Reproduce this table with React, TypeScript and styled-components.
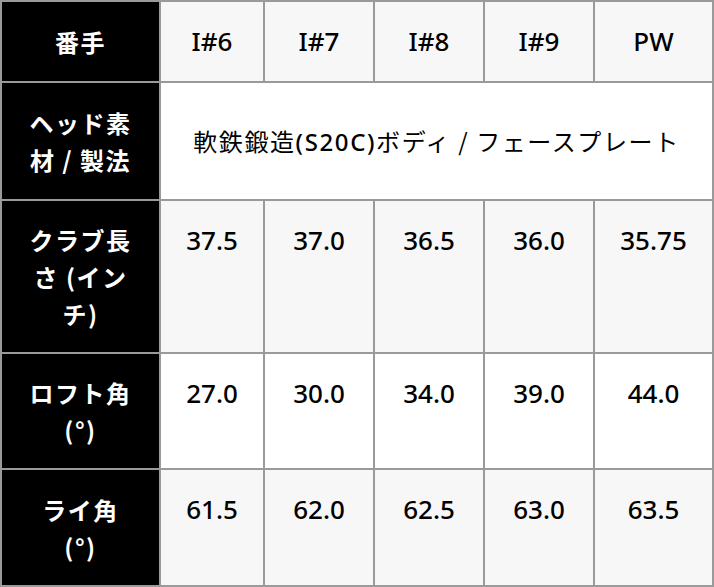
import styled, { createGlobalStyle } from "styled-components";

const Global = createGlobalStyle`
    html, body {
        margin: 0;
        padding: 0;
        background: #ffffff;
    }
    body {
        font-family: "Noto Sans", "Noto Sans CJK JP", sans-serif;
    }
`;

const Table = styled.div`
    display: grid;
    grid-template-columns: 157px 102px 108px 108px 108px 117px;
    grid-template-rows: 79px 116px 151px 114px 115px;
    gap: 2px;
    padding: 2px;
    width: 714px;
    height: 587px;
    box-sizing: border-box;
    background-color: #9a9a9a;
`;

const HeadCell = styled.div`
    display: flex;
    align-items: center;
    justify-content: center;
    text-align: center;
    background-color: #000000;
    color: #ffffff;
    font-family: "Noto Sans CJK JP", "Noto Sans", sans-serif;
    font-weight: 700;
    font-size: 24px;
    letter-spacing: 1.5px;
    line-height: 37px;
`;

const DataCell = styled.div<{ $shade?: boolean; $span?: number; $middle?: boolean }>`
    display: flex;
    justify-content: center;
    align-items: ${(p) => (p.$middle ? "center" : "flex-start")};
    padding-top: ${(p) => (p.$middle ? "0" : "21px")};
    box-sizing: border-box;
    grid-column: ${(p) => (p.$span ? `span ${p.$span}` : "auto")};
    background-color: ${(p) => (p.$shade ? "#f7f7f7" : "#ffffff")};
    color: #000000;
    font-family: "Noto Sans", "Noto Sans CJK JP", sans-serif;
    font-weight: 500;
    font-size: 26px;
    line-height: 37px;
    white-space: nowrap;
`;

const Spec = styled.span`
    font-family: "Noto Sans CJK JP", sans-serif;
    font-weight: 400;
    font-size: 24px;
    letter-spacing: 1.6px;
`;

const Latin = styled.span`
    font-family: "Noto Sans", sans-serif;
    font-weight: 500;
`;

const clubs = ["I#6", "I#7", "I#8", "I#9", "PW"];
const lengths = ["37.5", "37.0", "36.5", "36.0", "35.75"];
const lofts = ["27.0", "30.0", "34.0", "39.0", "44.0"];
const lies = ["61.5", "62.0", "62.5", "63.0", "63.5"];

const App = () => {
    return (
        <>
            <Global />
            <Table>
                <HeadCell>番手</HeadCell>
                {clubs.map((c) => (
                    <DataCell key={c} $shade>
                        {c}
                    </DataCell>
                ))}

                <HeadCell>
                    ヘッド素
                    <br />
                    材 / 製法
                </HeadCell>
                <DataCell $span={5} $middle>
                    <Spec>
                        軟鉄鍛造<Latin>(S20C)</Latin>ボディ / フェースプレート
                    </Spec>
                </DataCell>

                <HeadCell>
                    クラブ長
                    <br />
                    さ (イン
                    <br />
                    チ)
                </HeadCell>
                {lengths.map((v, i) => (
                    <DataCell key={i} $shade>
                        {v}
                    </DataCell>
                ))}

                <HeadCell>
                    ロフト角
                    <br />
                    (°)
                </HeadCell>
                {lofts.map((v, i) => (
                    <DataCell key={i}>{v}</DataCell>
                ))}

                <HeadCell>
                    ライ角
                    <br />
                    (°)
                </HeadCell>
                {lies.map((v, i) => (
                    <DataCell key={i} $shade>
                        {v}
                    </DataCell>
                ))}
            </Table>
        </>
    );
};

export default App;
